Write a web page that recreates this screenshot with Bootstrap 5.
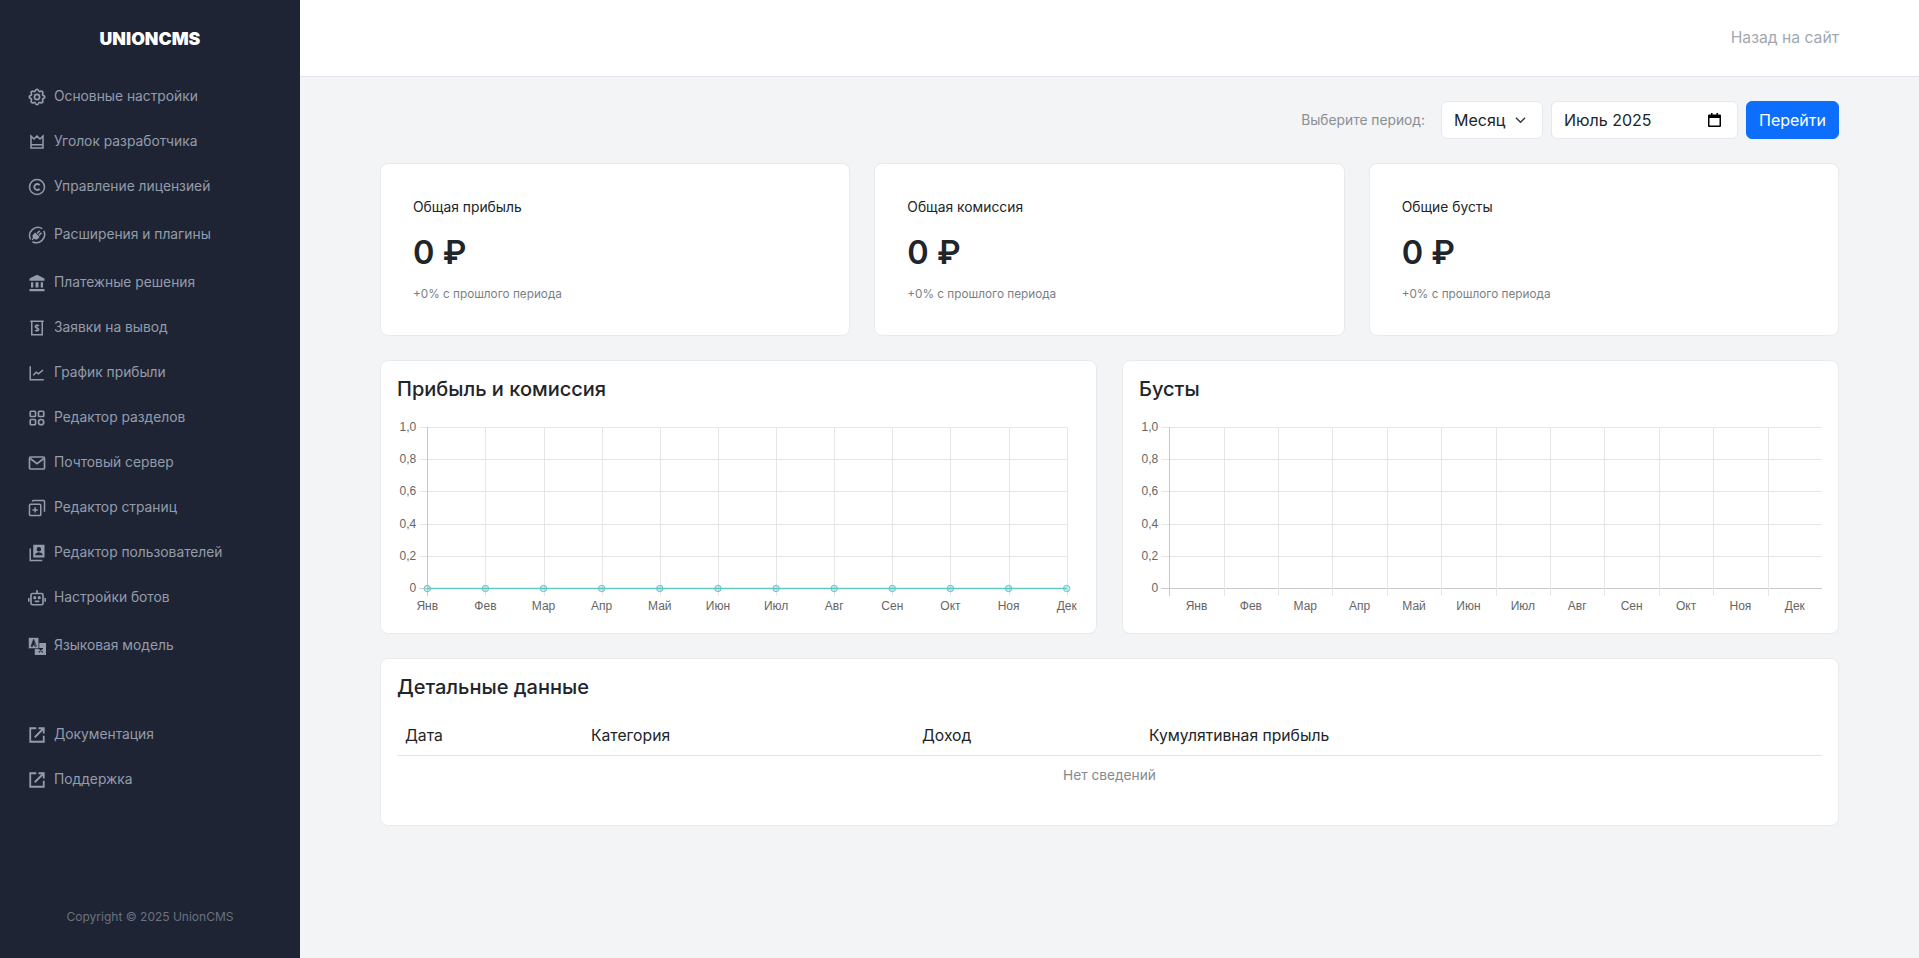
<!DOCTYPE html>
<html lang="ru">
<head>
<meta charset="utf-8">
<title>UnionCMS</title>
<link rel="stylesheet" href="https://cdn.jsdelivr.net/npm/bootstrap@5.3.0/dist/css/bootstrap.min.css">
<style>
html,body{height:100%}
body{font-family:Inter,"Liberation Sans",sans-serif;background:#f2f4f5;color:#212529;overflow:hidden}
.shell{height:958px}
.side{width:300px;flex:none;background:#1e2433;color:#949cab;position:relative}
.logo{height:74px;padding-top:4px;font-weight:900;font-size:17.7px;color:#fff}
.side-link{display:flex;align-items:center;gap:8px;height:45px;padding-left:28px;color:#949cab;font-size:13.8px;text-decoration:none;white-space:nowrap}
.side-link svg{width:18px;height:18px;flex:none}
.side-link.tall{height:51px}
.gap-side{height:41px}
.copy-line{font-size:12px;color:#6a7282;position:absolute;left:0;right:0;top:908px;text-align:center}
.top-bar{height:77px;background:#fff;border-bottom:1px solid #e1e4e8;padding-right:80px;color:#a3a8af;font-size:15.7px}
.page{padding:24px 80px 0 80px}
.period{height:38px;margin-bottom:24px;gap:8px}
.period-label{font-size:13.8px;color:#8b8f95;margin-right:8px}
.sel-box,.date-box{height:38px;border:1px solid #e6e8eb;background:#fff;border-radius:6px;font-size:16px;color:#212529;padding:0 12px;display:flex;align-items:center}
.sel-box{width:102px;gap:10px}
.date-box{width:187px;justify-content:space-between;padding-right:16px}
.go-btn{height:38px;width:93px;padding:0;font-size:16px}
.tile{background:#fff;border:1px solid #e8eaed;border-radius:8px}
.stat-row{display:grid;grid-template-columns:repeat(3,1fr);gap:24px;margin-bottom:24px}
.stat-tile{height:173px;padding:33px 32px}
.stat-name{font-size:13.85px;line-height:21px;color:#212529}
.stat-val{font-size:32.5px;font-weight:600;line-height:38px;margin-top:16px}
.stat-note{font-size:11.75px;line-height:18px;color:#7a7f85;margin-top:13px}
.chart-row{display:grid;grid-template-columns:1fr 1fr;gap:25px;margin-bottom:24px}
.chart-tile{height:274px;padding:16px;position:relative}
.tile-h{font-size:20px;font-weight:500;line-height:24px;margin:0}
.chart-svg{display:block;position:absolute;left:0;top:0}
.chart-svg text{font-family:"Liberation Sans",sans-serif;font-size:12px;fill:#666}
.table-tile{height:168px;padding:16px}
.data-table{width:100%;margin-top:14px;table-layout:fixed;margin-bottom:0}
.data-table th{font-weight:400;font-size:15.7px;height:42px;padding:4px 8px 0;border-bottom:1px solid #e1e4e8;color:#212529;vertical-align:middle;background:transparent}
.data-table td{font-size:13.7px;color:#85898f;text-align:center;border:0;padding:9px 8px 8px;background:transparent}
</style>
</head>
<body>
<div class="d-flex shell">
<aside class="side">
  <div class="logo d-flex align-items-center justify-content-center">UNIONCMS</div>
  <nav class="d-flex flex-column">
    <a class="side-link" href="#"><svg viewBox="1.500 1.500 21 21" fill="none" stroke="currentColor" stroke-width="2"><path d="M10.325 4.317c.426-1.756 2.924-1.756 3.35 0a1.724 1.724 0 0 0 2.573 1.066c1.543-.94 3.31.826 2.37 2.37a1.724 1.724 0 0 0 1.065 2.572c1.756.426 1.756 2.924 0 3.35a1.724 1.724 0 0 0-1.066 2.573c.94 1.543-.826 3.31-2.37 2.37a1.724 1.724 0 0 0-2.572 1.065c-.426 1.756-2.924 1.756-3.35 0a1.724 1.724 0 0 0-2.573-1.066c-1.543.94-3.31-.826-2.37-2.37a1.724 1.724 0 0 0-1.065-2.572c-1.756-.426-1.756-2.924 0-3.35a1.724 1.724 0 0 0 1.066-2.573c-.94-1.543.826-3.31 2.37-2.37 1 .608 2.296.07 2.572-1.065z"/><circle cx="12" cy="12" r="3"/></svg>Основные настройки</a>
    <a class="side-link" href="#"><svg viewBox="0 0 24 24" fill="none" stroke="currentColor" stroke-width="2"><path d="M4 4v16h16V4l-4 4-4-4-4 4zM4 15.500h16"/></svg>Уголок разработчика</a>
    <a class="side-link" href="#"><svg viewBox="0 0 24 24" fill="none" stroke="currentColor" stroke-width="2"><circle cx="12" cy="12" r="10"/><path d="M15.500 9.500a4 4 0 1 0 0 5" stroke-width="2.400"/></svg>Управление лицензией</a>
    <a class="side-link tall" href="#"><svg viewBox="0 0 24 24" fill="none" stroke="currentColor" stroke-width="2"><path d="M3.500 18A11 11 0 0 1 19 3.500M21 6.500A11 11 0 0 1 6 21"/><path fill="currentColor" stroke="none" d="M9.500 8.500l6 6-2 2a4 4 0 0 1-5.500.500l-2 2-1.200-1.200 2-2a4 4 0 0 1 .700-5.300z"/><path d="M12 10l3.500-3.500M14.500 12.500l3.500-3.500"/></svg>Расширения и плагины</a>
    <a class="side-link" href="#"><svg viewBox="0 0 24 24" fill="currentColor"><path d="M12 1 2 6v3h20V6zM4 11v7h3v-7zm6 0v7h4v-7zm7 0v7h3v-7zM2 20v3h20v-3z"/></svg>Платежные решения</a>
    <a class="side-link" href="#"><svg viewBox="0 0 24 24" fill="none" stroke="currentColor" stroke-width="2"><path d="M3 3h18M5 3v18h14V3"/><path stroke-width="1.700" d="M14.500 9.500c-.5-1-1.500-1.300-2.500-1.300-1.500 0-2.500.8-2.500 1.900 0 2.600 5 1.300 5 3.900 0 1.100-1 1.900-2.500 1.900-1 0-2-.4-2.500-1.300M12 7v10"/></svg>Заявки на вывод</a>
    <a class="side-link" href="#"><svg viewBox="0 0 24 24" fill="none" stroke="currentColor" stroke-width="2"><path d="M3 3v18h18"/><path d="m7 15 4-4 3 2 6-5"/></svg>График прибыли</a>
    <a class="side-link" href="#"><svg viewBox="0 0 24 24" fill="none" stroke="currentColor" stroke-width="2.200"><rect x="3" y="3" width="7" height="7" rx="1"/><rect x="14" y="3" width="7" height="7" rx="1"/><rect x="3" y="14" width="7" height="7" rx="1"/><circle cx="17.500" cy="17.500" r="3.500"/></svg>Редактор разделов</a>
    <a class="side-link" href="#"><svg viewBox="0 0 24 24" fill="none" stroke="currentColor" stroke-width="2.200"><rect x="2" y="4" width="20" height="16" rx="1.500"/><path d="m3 6 9 7 9-7"/></svg>Почтовый сервер</a>
    <a class="side-link" href="#"><svg viewBox="0 0 24 24" fill="none" stroke="currentColor" stroke-width="2"><rect x="2" y="7" width="15" height="15" rx="1.500"/><path d="M6 3.500V3a1 1 0 0 1 1-1h14a1 1 0 0 1 1 1v14M9.500 11v7M6 14.500h7"/></svg>Редактор страниц</a>
    <a class="side-link" href="#"><svg viewBox="0 0 24 24" fill="currentColor"><path fill-rule="evenodd" d="M7 1h15v17H7zm7.500 3a3 3 0 1 0 0 6 3 3 0 0 0 0-6zM9.500 15h10c0-3-3-4-5-4s-5 1-5 4z"/><path d="M2 6h2v15h15v2H2z"/></svg>Редактор пользователей</a>
    <a class="side-link" href="#"><svg viewBox="0 0 24 24" fill="none" stroke="currentColor" stroke-width="2.200"><rect x="4" y="6" width="16" height="15" rx="2"/><path d="M12 6V3M1 12v5M23 12v5M9 16.500h6"/><circle cx="12" cy="2.500" r="1.300" fill="currentColor" stroke="none"/><circle cx="9" cy="11.500" r="1" fill="currentColor"/><circle cx="15" cy="11.500" r="1" fill="currentColor"/></svg>Настройки ботов</a>
    <a class="side-link tall" href="#"><svg viewBox="0 0 24 24" fill="currentColor"><path fill-rule="evenodd" d="M9 8h15v16H9z"/><path fill-rule="evenodd" stroke="#1e2433" stroke-width="1" d="M.5.500h14v15H.5zM7.500 3 4 12.500h2l.6-2h2l.6 2h2L7.500 3z"/><path d="M14 15.500h6M18.500 15.500l-4 5M15.500 15.500l4 5" fill="none" stroke="#1e2433" stroke-width="1.500"/></svg>Языковая модель</a>
    <div class="gap-side"></div>
    <a class="side-link" href="#"><svg viewBox="0 0 24 24" fill="none" stroke="currentColor" stroke-width="2.400"><path d="M11 3H3v18h18v-8M9 15 21 3M14 3h7v7"/></svg>Документация</a>
    <a class="side-link" href="#"><svg viewBox="0 0 24 24" fill="none" stroke="currentColor" stroke-width="2.400"><path d="M11 3H3v18h18v-8M9 15 21 3M14 3h7v7"/></svg>Поддержка</a>
  </nav>
  <div class="copy-line">Copyright © 2025 UnionCMS</div>
</aside>
<main class="flex-grow-1 d-flex flex-column min-w-0">
  <header class="top-bar d-flex align-items-center justify-content-end">Назад на сайт</header>
  <div class="page">
    <div class="period d-flex align-items-center justify-content-end">
      <span class="period-label">Выберите период:</span>
      <div class="sel-box">Месяц<svg width="11" height="8" viewBox="0 0 12 8" fill="none" stroke="#343a40" stroke-width="1.600"><path d="m1 1.500 5 5 5-5"/></svg></div>
      <div class="date-box">Июль 2025<svg width="13" height="14" viewBox="0 0 13 14"><path fill-rule="evenodd" d="M3 0h1.500v1.500h4V0H10v1.500h2a1 1 0 0 1 1 1V13a1 1 0 0 1-1 1H1a1 1 0 0 1-1-1V2.500a1 1 0 0 1 1-1h2zM1.500 5v7.500h10V5z"/></svg></div>
      <button class="btn btn-primary go-btn" type="button">Перейти</button>
    </div>
    <div class="stat-row">
      <div class="tile stat-tile"><div class="stat-name">Общая прибыль</div><div class="stat-val">0 ₽</div><div class="stat-note">+0% с прошлого периода</div></div>
      <div class="tile stat-tile"><div class="stat-name">Общая комиссия</div><div class="stat-val">0 ₽</div><div class="stat-note">+0% с прошлого периода</div></div>
      <div class="tile stat-tile"><div class="stat-name">Общие бусты</div><div class="stat-val">0 ₽</div><div class="stat-note">+0% с прошлого периода</div></div>
    </div>
    <div class="chart-row">
      <div class="tile chart-tile"><h5 class="tile-h">Прибыль и комиссия</h5><svg class="chart-svg" id="c1" width="716" height="272"></svg></div>
      <div class="tile chart-tile"><h5 class="tile-h">Бусты</h5><svg class="chart-svg" id="c2" width="716" height="272"></svg></div>
    </div>
    <div class="tile table-tile">
      <h5 class="tile-h">Детальные данные</h5>
      <table class="table data-table">
        <colgroup><col style="width:186px"><col style="width:331px"><col style="width:227px"><col></colgroup>
        <thead><tr><th>Дата</th><th>Категория</th><th>Доход</th><th>Кумулятивная прибыль</th></tr></thead>
        <tbody><tr><td colspan="4">Нет сведений</td></tr></tbody>
      </table>
    </div>
  </div>
</main>
</div>
<script src="https://cdn.jsdelivr.net/npm/bootstrap@5.3.0/dist/js/bootstrap.bundle.min.js"></script>
<script>
(function(){
var M=['Янв','Фев','Мар','Апр','Май','Июн','Июл','Авг','Сен','Окт','Ноя','Дек'];
var Y=['1,0','0,8','0,6','0,4','0,2','0'];
var G='#e6e6e6',A='#c9c9c9';
function build(id,x0,x1,line){
  var yT=66,yB=227,h=(yB-yT)/5,s='',i,x,y;
  var n=line?11:12,st=(x1-x0)/n;
  for(i=0;i<6;i++){y=Math.round(yT+h*i)+.5;
    s+='<line x1="'+(x0-8)+'" x2="'+x1+'" y1="'+y+'" y2="'+y+'" stroke="'+(i==5?A:G)+'"/>';
    s+='<text x="'+(x0-11)+'" y="'+(yT+h*i+4)+'" text-anchor="end">'+Y[i]+'</text>';}
  for(i=0;i<12;i++){x=Math.round(x0+st*i)+.5;
    s+='<line x1="'+x+'" x2="'+x+'" y1="'+yT+'" y2="'+(yB+8)+'" stroke="'+(i==0?A:G)+'"/>';
    var c=line?x0+st*i:x0+st*(i+.5);
    s+='<text x="'+c+'" y="'+(yB+22)+'" text-anchor="middle">'+M[i]+'</text>';}
  if(line){
    s+='<line x1="'+x0+'" x2="'+x1+'" y1="'+(yB+.5)+'" y2="'+(yB+.5)+'" stroke="#63c7c7" stroke-width="1.300"/>';
    for(i=0;i<12;i++)s+='<circle cx="'+(x0+st*i)+'" cy="'+(yB+.5)+'" r="3.200" fill="rgba(75,192,192,.25)" stroke="#63c7c7"/>';
  }
  document.getElementById(id).innerHTML=s;
}
build('c1',46.3,685.7,true);
build('c2',46.3,699,false);
})();
</script>
</body>
</html>
